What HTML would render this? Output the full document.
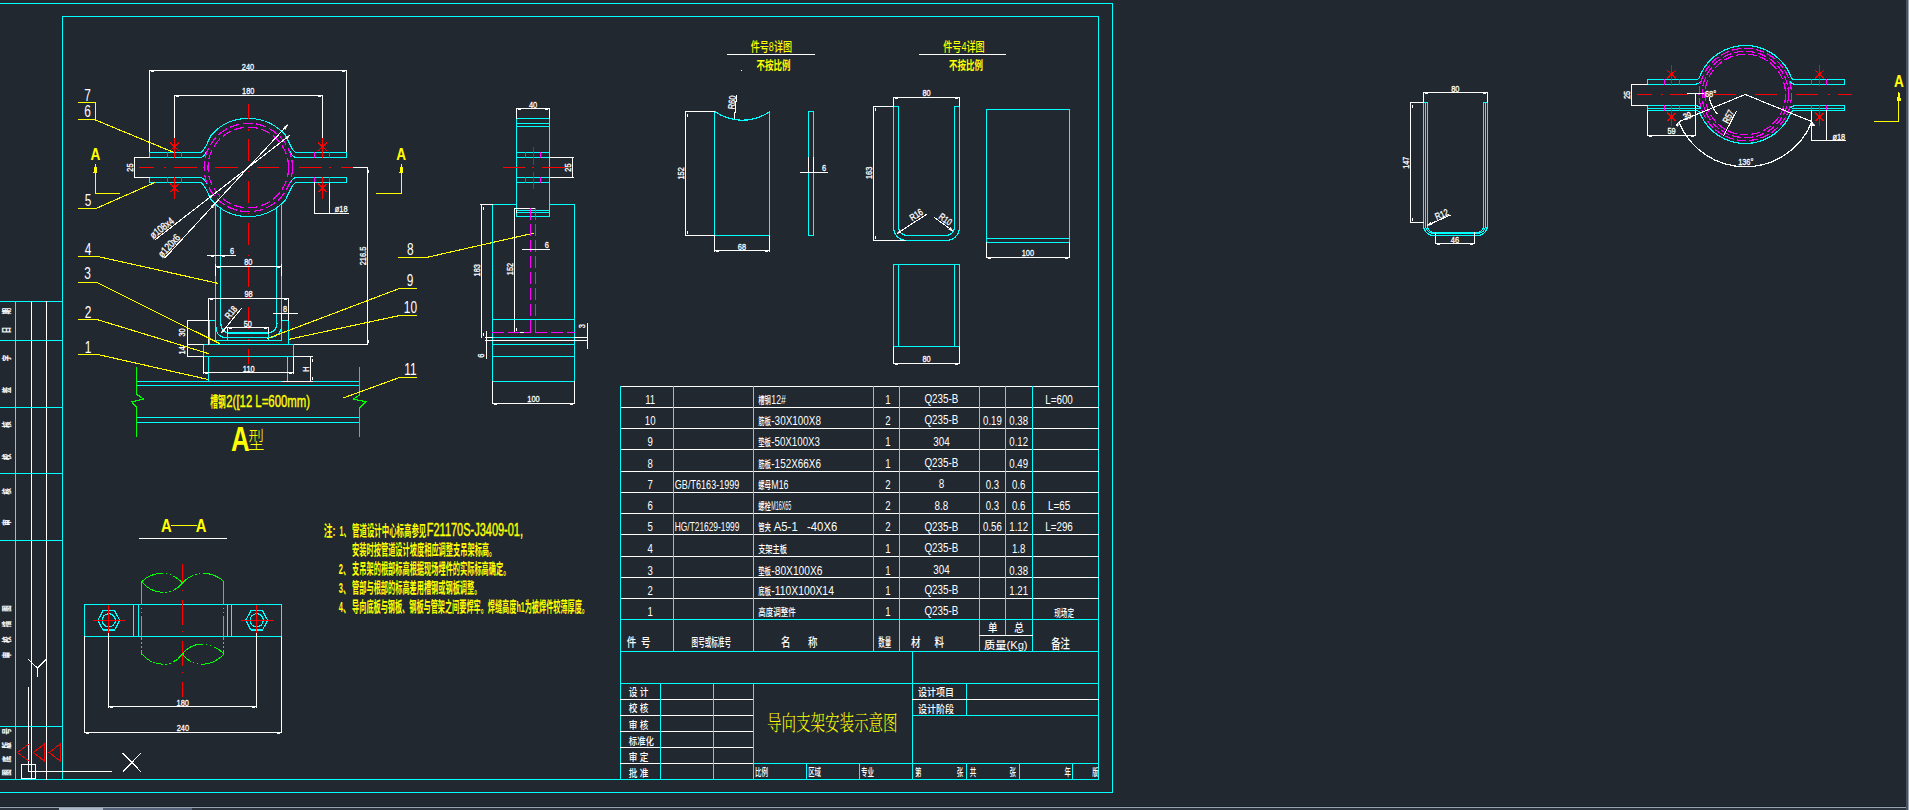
<!DOCTYPE html>
<html lang="zh"><head><meta charset="utf-8"><title>导向支架安装示意图</title>
<style>
html,body{margin:0;padding:0;background:#212830;overflow:hidden}
svg{display:block}
path,circle{shape-rendering:crispEdges}
.c{shape-rendering:crispEdges}
text{font-family:"Liberation Sans","Noto Sans CJK SC",sans-serif}
.l{font-family:"Liberation Sans",sans-serif}
.k{font-family:"Liberation Sans","Noto Sans CJK SC",sans-serif}
.s{font-family:"Liberation Serif","Noto Serif CJK SC",serif}
</style></head><body>
<svg width="1909" height="810" viewBox="0 0 1909 810">
<rect width="1909" height="810" fill="#212830"/>
<path class="c" d="M0 3.5H1113" stroke="#00ffff" stroke-width="1"/>
<path class="c" d="M1112.5 3V793" stroke="#00ffff" stroke-width="1"/>
<path class="c" d="M0 792.5H1113" stroke="#00ffff" stroke-width="1"/>
<path class="c" d="M62 16.5H1099" stroke="#00ffff" stroke-width="1"/>
<path class="c" d="M62.5 16V780" stroke="#00ffff" stroke-width="1"/>
<path class="c" d="M1098.5 16V780" stroke="#00ffff" stroke-width="1"/>
<path class="c" d="M0 779.5H1099" stroke="#00ffff" stroke-width="1"/>
<path class="c" d="M0 301.5H63" stroke="#00ffff" stroke-width="1"/>
<path class="c" d="M15.5 301V780" stroke="#00ffff" stroke-width="1"/>
<path class="c" d="M31.5 301V780" stroke="#ffffff" stroke-width="1"/>
<path class="c" d="M46.5 301V780" stroke="#ffffff" stroke-width="1"/>
<path class="c" d="M0 340.5H63" stroke="#00ffff" stroke-width="1"/>
<path class="c" d="M0 407.5H63" stroke="#00ffff" stroke-width="1"/>
<path class="c" d="M0 473.5H63" stroke="#00ffff" stroke-width="1"/>
<path class="c" d="M0 540.5H63" stroke="#00ffff" stroke-width="1"/>
<path class="c" d="M0 726.5H63" stroke="#00ffff" stroke-width="1"/>
<text class="k" transform="translate(9.5 311) rotate(-90) scale(0.7 1)" font-size="9" fill="#ffffff" text-anchor="middle" font-weight="500" stroke="#ffffff" stroke-width="0.3">期</text>
<text class="k" transform="translate(9.5 330) rotate(-90) scale(0.7 1)" font-size="9" fill="#ffffff" text-anchor="middle" font-weight="500" stroke="#ffffff" stroke-width="0.3">日</text>
<text class="k" transform="translate(9.5 358) rotate(-90) scale(0.7 1)" font-size="9" fill="#ffffff" text-anchor="middle" font-weight="500" stroke="#ffffff" stroke-width="0.3">字</text>
<text class="k" transform="translate(9.5 390) rotate(-90) scale(0.7 1)" font-size="9" fill="#ffffff" text-anchor="middle" font-weight="500" stroke="#ffffff" stroke-width="0.3">签</text>
<text class="k" transform="translate(9.5 424.7) rotate(-90) scale(0.7 1)" font-size="9" fill="#ffffff" text-anchor="middle" font-weight="500" stroke="#ffffff" stroke-width="0.3">核</text>
<text class="k" transform="translate(9.5 456.8) rotate(-90) scale(0.7 1)" font-size="9" fill="#ffffff" text-anchor="middle" font-weight="500" stroke="#ffffff" stroke-width="0.3">校</text>
<text class="k" transform="translate(9.5 491.4) rotate(-90) scale(0.7 1)" font-size="9" fill="#ffffff" text-anchor="middle" font-weight="500" stroke="#ffffff" stroke-width="0.3">核</text>
<text class="k" transform="translate(9.5 522.7) rotate(-90) scale(0.7 1)" font-size="9" fill="#ffffff" text-anchor="middle" font-weight="500" stroke="#ffffff" stroke-width="0.3">审</text>
<text class="k" transform="translate(9.5 608.5) rotate(-90) scale(0.7 1)" font-size="9" fill="#ffffff" text-anchor="middle" font-weight="500" stroke="#ffffff" stroke-width="0.3">图</text>
<text class="k" transform="translate(9.5 624) rotate(-90) scale(0.7 1)" font-size="9" fill="#ffffff" text-anchor="middle" font-weight="500" stroke="#ffffff" stroke-width="0.3">描</text>
<text class="k" transform="translate(9.5 639.7) rotate(-90) scale(0.7 1)" font-size="9" fill="#ffffff" text-anchor="middle" font-weight="500" stroke="#ffffff" stroke-width="0.3">校</text>
<text class="k" transform="translate(9.5 655.2) rotate(-90) scale(0.7 1)" font-size="9" fill="#ffffff" text-anchor="middle" font-weight="500" stroke="#ffffff" stroke-width="0.3">审</text>
<text class="k" transform="translate(9.5 731.3) rotate(-90) scale(0.7 1)" font-size="9" fill="#ffffff" text-anchor="middle" font-weight="500" stroke="#ffffff" stroke-width="0.3">号</text>
<text class="k" transform="translate(9.5 745.4) rotate(-90) scale(0.7 1)" font-size="9" fill="#ffffff" text-anchor="middle" font-weight="500" stroke="#ffffff" stroke-width="0.3">版</text>
<text class="k" transform="translate(9.5 759) rotate(-90) scale(0.7 1)" font-size="9" fill="#ffffff" text-anchor="middle" font-weight="500" stroke="#ffffff" stroke-width="0.3">底</text>
<text class="k" transform="translate(9.5 772.6) rotate(-90) scale(0.7 1)" font-size="9" fill="#ffffff" text-anchor="middle" font-weight="500" stroke="#ffffff" stroke-width="0.3">图</text>
<path class="c" d="M28.5 687V772" stroke="#ffffff" stroke-width="1"/>
<path class="c" d="M28 771.5H112" stroke="#ffffff" stroke-width="1"/>
<path class="c" d="M21 764.5H36" stroke="#ffffff" stroke-width="1"/>
<path class="c" d="M21 778.5H36" stroke="#ffffff" stroke-width="1"/>
<path class="c" d="M21.5 764V779" stroke="#ffffff" stroke-width="1"/>
<path class="c" d="M35.5 764V779" stroke="#ffffff" stroke-width="1"/>
<path d="M27.9 659L37.4 668L46.2 659.5M37.4 668V677" stroke="#ffffff" stroke-width="1" fill="none"/>
<path d="M122.8 753.1L141 771.8M141 753.1L122.8 771.8" stroke="#ffffff" stroke-width="1" fill="none"/>
<path d="M17.5 752.5L29.5 743.6V761.5Z" stroke="#ff0000" stroke-width="1" fill="none"/>
<path d="M33.4 752.5L44.8 743.6V761.5Z" stroke="#ff0000" stroke-width="1" fill="none"/>
<path d="M49.2 752.5L60.7 743.6V761.5Z" stroke="#ff0000" stroke-width="1" fill="none"/>
<rect x="0" y="806" width="1909" height="1" fill="#1a2027"/>
<rect x="0" y="807" width="1909" height="1" fill="#98a4b4"/>
<rect x="0" y="808" width="1909" height="2" fill="#2c3440"/>
<rect x="59" y="808" width="44" height="2" fill="#a9b5c5"/>
<rect x="103" y="808" width="89" height="2" fill="#55627a"/>
<rect x="1906" y="0" width="2" height="810" fill="#4a5260"/>
<rect x="1908" y="0" width="1" height="810" fill="#98a4b4"/>
<path class="c" d="M149.5 70V153" stroke="#ffffff" stroke-width="1"/>
<path class="c" d="M346.5 70V153" stroke="#ffffff" stroke-width="1"/>
<path class="c" d="M149 70.5H347" stroke="#ffffff" stroke-width="1"/>
<rect x="151" y="71" width="3" height="1" fill="#ffffff"/>
<rect x="342" y="71" width="3" height="1" fill="#ffffff"/>
<text class="l" transform="translate(248 69.5) scale(0.78 1)" font-size="9.5" fill="#ffffff" text-anchor="middle" stroke="#ffffff" stroke-width="0.3">240</text>
<path class="c" d="M174.5 95V139" stroke="#ffffff" stroke-width="1"/>
<path class="c" d="M322.5 95V139" stroke="#ffffff" stroke-width="1"/>
<path class="c" d="M174 95.5H323" stroke="#ffffff" stroke-width="1"/>
<rect x="176" y="96" width="3" height="1" fill="#ffffff"/>
<rect x="318" y="96" width="3" height="1" fill="#ffffff"/>
<text class="l" transform="translate(248.2 94) scale(0.78 1)" font-size="9.5" fill="#ffffff" text-anchor="middle" stroke="#ffffff" stroke-width="0.3">180</text>
<path d="M149.5 152.5H200.07Q203.78 152.5 210.67 135.8A49.2 49.2 0 0 1 285.93 135.8Q292.82 152.5 296.53 152.5H346.5" stroke="#00ffff" stroke-width="1.2" fill="none"/>
<path d="M149.5 182.5H200.07Q203.78 182.5 210.67 199.2A49.2 49.2 0 0 0 285.93 199.2Q292.82 182.5 296.53 182.5H346.5" stroke="#00ffff" stroke-width="1.2" fill="none"/>
<path d="M149.5 157.5H200.28Q203.78 157.5 206.78 151.5" stroke="#00ffff" stroke-width="1.2" fill="none"/>
<path d="M346.5 157.5H296.32Q292.82 157.5 289.82 151.5" stroke="#00ffff" stroke-width="1.2" fill="none"/>
<path d="M149.5 177.5H200.28Q203.78 177.5 206.78 183.5" stroke="#00ffff" stroke-width="1.2" fill="none"/>
<path d="M346.5 177.5H296.32Q292.82 177.5 289.82 183.5" stroke="#00ffff" stroke-width="1.2" fill="none"/>
<path class="c" d="M149.5 152V158" stroke="#00ffff" stroke-width="1"/>
<path class="c" d="M346.5 152V158" stroke="#00ffff" stroke-width="1"/>
<path class="c" d="M149.5 177V183" stroke="#00ffff" stroke-width="1"/>
<path class="c" d="M346.5 177V183" stroke="#00ffff" stroke-width="1"/>
<circle cx="248.3" cy="167.5" r="44.2" stroke="#ff00ff" stroke-width="1.2" fill="none" stroke-dasharray="10 3.5"/>
<circle cx="248.3" cy="167.5" r="40.3" stroke="#ff00ff" stroke-width="1.2" fill="none" stroke-dasharray="10 3.5"/>
<path class="c" d="M167.5 152V158" stroke="#ff00ff" stroke-width="1"/>
<path class="c" d="M167.5 177V183" stroke="#ff00ff" stroke-width="1"/>
<path class="c" d="M181.5 152V158" stroke="#ff00ff" stroke-width="1"/>
<path class="c" d="M181.5 177V183" stroke="#ff00ff" stroke-width="1"/>
<path class="c" d="M314.5 152V158" stroke="#ff00ff" stroke-width="1"/>
<path class="c" d="M314.5 177V183" stroke="#ff00ff" stroke-width="1"/>
<path class="c" d="M329.5 152V158" stroke="#ff00ff" stroke-width="1"/>
<path class="c" d="M329.5 177V183" stroke="#ff00ff" stroke-width="1"/>
<path class="c" d="M139 167.5H154" stroke="#ff0000" stroke-width="1"/>
<path class="c" d="M164 167.5H166" stroke="#ff0000" stroke-width="1"/>
<path class="c" d="M174 167.5H197" stroke="#ff0000" stroke-width="1"/>
<path class="c" d="M215 167.5H238" stroke="#ff0000" stroke-width="1"/>
<path class="c" d="M248 167.5H250" stroke="#ff0000" stroke-width="1"/>
<path class="c" d="M257 167.5H279" stroke="#ff0000" stroke-width="1"/>
<path class="c" d="M299 167.5H322" stroke="#ff0000" stroke-width="1"/>
<path class="c" d="M329 167.5H331" stroke="#ff0000" stroke-width="1"/>
<path class="c" d="M341 167.5H354" stroke="#ff0000" stroke-width="1"/>
<path class="c" d="M248.5 104V364" stroke="#ff0000" stroke-width="1" stroke-dasharray="22 10.1 1.2 8.6" stroke-dashoffset="6.8"/>
<path class="c" d="M174.5 138V158" stroke="#ff0000" stroke-width="1"/>
<path class="c" d="M174.5 177V199" stroke="#ff0000" stroke-width="1"/>
<path d="M170.2 142.60000000000002L178.8 151.0M178.8 142.60000000000002L170.2 151.0" stroke="#ff0000" stroke-width="1" fill="none"/>
<path d="M170.2 183.8L178.8 192.2M178.8 183.8L170.2 192.2" stroke="#ff0000" stroke-width="1" fill="none"/>
<path class="c" d="M322.5 138V158" stroke="#ff0000" stroke-width="1"/>
<path class="c" d="M322.5 177V199" stroke="#ff0000" stroke-width="1"/>
<path d="M318.2 142.60000000000002L326.8 151.0M326.8 142.60000000000002L318.2 151.0" stroke="#ff0000" stroke-width="1" fill="none"/>
<path d="M318.2 183.8L326.8 192.2M326.8 183.8L318.2 192.2" stroke="#ff0000" stroke-width="1" fill="none"/>
<path class="c" d="M134.5 157V178" stroke="#ffffff" stroke-width="1"/>
<path class="c" d="M134 157.5H150" stroke="#ffffff" stroke-width="1"/>
<path class="c" d="M134 177.5H150" stroke="#ffffff" stroke-width="1"/>
<text class="l" transform="translate(132.6 167.6) rotate(-90) scale(0.78 1)" font-size="9.5" fill="#ffffff" text-anchor="middle" stroke="#ffffff" stroke-width="0.3">25</text>
<path class="c" d="M353 167.5H368" stroke="#ffffff" stroke-width="1"/>
<path class="c" d="M367.5 167V345" stroke="#ffffff" stroke-width="1"/>
<path class="c" d="M294 344.5H368" stroke="#ffffff" stroke-width="1"/>
<rect x="368" y="170" width="1" height="3" fill="#ffffff"/>
<rect x="368" y="340" width="1" height="3" fill="#ffffff"/>
<text class="l" transform="translate(365.8 256) rotate(-90) scale(0.78 1)" font-size="9.5" fill="#ffffff" text-anchor="middle" stroke="#ffffff" stroke-width="0.3">216.5</text>
<path class="c" d="M314.5 182V214" stroke="#ffffff" stroke-width="1"/>
<path class="c" d="M329.5 182V214" stroke="#ffffff" stroke-width="1"/>
<path class="c" d="M314 213.5H349" stroke="#ffffff" stroke-width="1"/>
<text class="l" transform="translate(341.2 211.6) scale(0.78 1)" font-size="9.5" fill="#ffffff" text-anchor="middle" stroke="#ffffff" stroke-width="0.3">ø18</text>
<path d="M287.6 124.9L164.5 258.3" stroke="#ffffff" stroke-width="1.1"/>
<path d="M289.8 135.3L155.2 239.7" stroke="#ffffff" stroke-width="1.1"/>
<path d="M287.6 124.9L285.5 129.09L283.59 127.33Z" fill="#ffffff" stroke="#ffffff" stroke-width="0.5"/>
<path d="M289.8 135.3L287.04 139.09L285.45 137.03Z" fill="#ffffff" stroke="#ffffff" stroke-width="0.5"/>
<path d="M214.94 203.66L212.84 207.85L210.93 206.09Z" fill="#ffffff" stroke="#ffffff" stroke-width="0.5"/>
<path d="M213.38 194.6L210.62 198.38L209.03 196.33Z" fill="#ffffff" stroke="#ffffff" stroke-width="0.5"/>
<text class="l" transform="translate(164 230.8) rotate(-37.81) scale(0.78 1)" font-size="10.5" fill="#ffffff" text-anchor="middle" stroke="#ffffff" stroke-width="0.3">ø108x4</text>
<text class="l" transform="translate(171.7 248.1) rotate(-47.31) scale(0.78 1)" font-size="10.5" fill="#ffffff" text-anchor="middle" stroke="#ffffff" stroke-width="0.3">ø120x6</text>
<path class="c" d="M215.5 204V328" stroke="#00ffff" stroke-width="1"/>
<path class="c" d="M220.5 207V324" stroke="#00ffff" stroke-width="1"/>
<path class="c" d="M276.5 207V324" stroke="#00ffff" stroke-width="1"/>
<path class="c" d="M281.5 204V328" stroke="#00ffff" stroke-width="1"/>
<path d="M215.9 327Q216.2 336.5 225 337.7H269.5Q280.4 336.5 281.7 327" stroke="#00ffff" stroke-width="1.2" fill="none"/>
<path d="M220.7 323Q221 331.5 228 333H269Q276.5 331.5 277 323" stroke="#00ffff" stroke-width="1.2" fill="none"/>
<path class="c" d="M215 340.5H282" stroke="#00ffff" stroke-width="1"/>
<path class="c" d="M215.5 327V341" stroke="#00ffff" stroke-width="1"/>
<path class="c" d="M281.5 327V341" stroke="#00ffff" stroke-width="1"/>
<path class="c" d="M227.5 333V341" stroke="#00ffff" stroke-width="1"/>
<path class="c" d="M268.5 333V341" stroke="#00ffff" stroke-width="1"/>
<path class="c" d="M209 320.5H216" stroke="#00ffff" stroke-width="1"/>
<path class="c" d="M209.5 320V345" stroke="#00ffff" stroke-width="1"/>
<path class="c" d="M281 320.5H289" stroke="#00ffff" stroke-width="1"/>
<path class="c" d="M288.5 320V345" stroke="#00ffff" stroke-width="1"/>
<path class="c" d="M203 344.5H294" stroke="#00ffff" stroke-width="1"/>
<path class="c" d="M203 356.5H294" stroke="#00ffff" stroke-width="1"/>
<path class="c" d="M203.5 344V357" stroke="#00ffff" stroke-width="1"/>
<path class="c" d="M293.5 344V357" stroke="#00ffff" stroke-width="1"/>
<path class="c" d="M208.5 356V382" stroke="#00ffff" stroke-width="1"/>
<path class="c" d="M287.5 356V382" stroke="#00ffff" stroke-width="1"/>
<path class="c" d="M136 381.5H360" stroke="#00ffff" stroke-width="1"/>
<path class="c" d="M136 385.5H360" stroke="#00ffff" stroke-width="1"/>
<path class="c" d="M136 417.5H360" stroke="#00ffff" stroke-width="1"/>
<path class="c" d="M136 422.5H360" stroke="#00ffff" stroke-width="1"/>
<path class="c" d="M136.5 367V395" stroke="#00ff00" stroke-width="1"/>
<path class="c" d="M136.5 407V437" stroke="#00ff00" stroke-width="1"/>
<path class="c" d="M359.5 367V395" stroke="#00ff00" stroke-width="1"/>
<path class="c" d="M359.5 407V437" stroke="#00ff00" stroke-width="1"/>
<path d="M137.1 394.5L143.6 399L131.7 401.8L137.1 407.4" stroke="#00ff00" stroke-width="1.2" fill="none"/>
<path d="M360.1 394.5L353.6 399L365.6 401.8L360.1 407.4" stroke="#00ff00" stroke-width="1.2" fill="none"/>
<text class="k" x="210.3" y="406.6" font-size="15" fill="#ffff00" font-weight="700" textLength="15.5" lengthAdjust="spacingAndGlyphs">槽钢</text>
<text class="l" x="226.3" y="407" font-size="16.5" fill="#ffff00" stroke="#ffff00" stroke-width="0.35" textLength="83.7" lengthAdjust="spacingAndGlyphs">2([12 L=600mm)</text>
<text class="l" transform="translate(231 451) scale(0.72 1)" font-size="36" fill="#ffff00" text-anchor="start" font-weight="700">A</text>
<text class="k" transform="translate(248 449) scale(0.68 1)" font-size="24" fill="#ffff00" text-anchor="start" font-weight="300">型</text>
<path class="c" d="M207 255.5H236" stroke="#ffffff" stroke-width="1"/>
<text class="l" transform="translate(232 253.8) scale(0.78 1)" font-size="9.5" fill="#ffffff" text-anchor="middle" stroke="#ffffff" stroke-width="0.3">6</text>
<rect x="211" y="256" width="3" height="1" fill="#ffffff"/>
<rect x="222" y="256" width="3" height="1" fill="#ffffff"/>
<path class="c" d="M215.5 264V276" stroke="#ffffff" stroke-width="1"/>
<path class="c" d="M281.5 264V276" stroke="#ffffff" stroke-width="1"/>
<path class="c" d="M215 266.5H282" stroke="#ffffff" stroke-width="1"/>
<rect x="217" y="267" width="3" height="1" fill="#ffffff"/>
<rect x="277" y="267" width="3" height="1" fill="#ffffff"/>
<text class="l" transform="translate(248.3 265) scale(0.78 1)" font-size="9.5" fill="#ffffff" text-anchor="middle" stroke="#ffffff" stroke-width="0.3">80</text>
<path class="c" d="M208.5 298V345" stroke="#ffffff" stroke-width="1"/>
<path class="c" d="M288.5 298V321" stroke="#ffffff" stroke-width="1"/>
<path class="c" d="M208 298.5H289" stroke="#ffffff" stroke-width="1"/>
<rect x="210" y="299" width="3" height="1" fill="#ffffff"/>
<rect x="284" y="299" width="3" height="1" fill="#ffffff"/>
<text class="l" transform="translate(248.6 297) scale(0.78 1)" font-size="9.5" fill="#ffffff" text-anchor="middle" stroke="#ffffff" stroke-width="0.3">98</text>
<path class="c" d="M273 313.5H298" stroke="#ffffff" stroke-width="1"/>
<text class="l" transform="translate(285 312) scale(0.78 1)" font-size="9.5" fill="#ffffff" text-anchor="middle" stroke="#ffffff" stroke-width="0.3">8</text>
<path class="c" d="M281.5 313V321" stroke="#ffffff" stroke-width="1"/>
<path class="c" d="M288.5 313V321" stroke="#ffffff" stroke-width="1"/>
<path class="c" d="M227.5 327V334" stroke="#ffffff" stroke-width="1"/>
<path class="c" d="M268.5 327V334" stroke="#ffffff" stroke-width="1"/>
<path class="c" d="M227 327.5H269" stroke="#ffffff" stroke-width="1"/>
<rect x="229" y="328" width="3" height="1" fill="#ffffff"/>
<rect x="264" y="328" width="3" height="1" fill="#ffffff"/>
<text class="l" transform="translate(247.75 326.8) scale(0.78 1)" font-size="9.5" fill="#ffffff" text-anchor="middle" stroke="#ffffff" stroke-width="0.3">50</text>
<path d="M221.3 333.1L241.8 307.9" stroke="#ffffff" stroke-width="1.1"/>
<path d="M221.3 333.1L223.12 328.78L225.14 330.42Z" fill="#ffffff" stroke="#ffffff" stroke-width="0.5"/>
<text class="l" transform="translate(233.5 314.5) rotate(-51) scale(0.78 1)" font-size="9.5" fill="#ffffff" text-anchor="middle" stroke="#ffffff" stroke-width="0.3">R18</text>
<path class="c" d="M187.5 320V357" stroke="#ffffff" stroke-width="1"/>
<path class="c" d="M187 320.5H210" stroke="#ffffff" stroke-width="1"/>
<path class="c" d="M187 344.5H204" stroke="#ffffff" stroke-width="1"/>
<path class="c" d="M187 356.5H204" stroke="#ffffff" stroke-width="1"/>
<text class="l" transform="translate(185.4 332.5) rotate(-90) scale(0.78 1)" font-size="9.5" fill="#ffffff" text-anchor="middle" stroke="#ffffff" stroke-width="0.3">30</text>
<text class="l" transform="translate(185.4 350.3) rotate(-90) scale(0.78 1)" font-size="9.5" fill="#ffffff" text-anchor="middle" stroke="#ffffff" stroke-width="0.3">14</text>
<path class="c" d="M203.5 356V374" stroke="#ffffff" stroke-width="1"/>
<path class="c" d="M293.5 356V374" stroke="#ffffff" stroke-width="1"/>
<path class="c" d="M203 372.5H294" stroke="#ffffff" stroke-width="1"/>
<rect x="205" y="373" width="3" height="1" fill="#ffffff"/>
<rect x="289" y="373" width="3" height="1" fill="#ffffff"/>
<text class="l" transform="translate(248.75 371.5) scale(0.78 1)" font-size="9.5" fill="#ffffff" text-anchor="middle" stroke="#ffffff" stroke-width="0.3">110</text>
<path class="c" d="M310.5 356V382" stroke="#ffffff" stroke-width="1"/>
<path class="c" d="M293 356.5H313" stroke="#ffffff" stroke-width="1"/>
<path class="c" d="M281 381.5H313" stroke="#ffffff" stroke-width="1"/>
<text class="l" transform="translate(308.8 369) rotate(-90) scale(0.78 1)" font-size="9.5" fill="#ffffff" text-anchor="middle" stroke="#ffffff" stroke-width="0.3">H</text>
<rect x="312" y="359" width="1" height="3" fill="#ffffff"/>
<rect x="312" y="377" width="1" height="3" fill="#ffffff"/>
<path class="c" d="M78 102.5H96" stroke="#ffff00" stroke-width="1"/>
<path class="c" d="M95.5 102V120" stroke="#ffff00" stroke-width="1"/>
<path class="c" d="M78 119.5H96" stroke="#ffff00" stroke-width="1"/>
<path d="M95.5 120L174 152.5" stroke="#ffff00" stroke-width="1.1"/>
<text class="l" transform="translate(87.5 100.8) scale(0.72 1)" font-size="16.5" fill="#ffffff" text-anchor="middle">7</text>
<text class="l" transform="translate(87.5 117.2) scale(0.72 1)" font-size="16.5" fill="#ffffff" text-anchor="middle">6</text>
<path class="c" d="M78 208.5H97" stroke="#ffff00" stroke-width="1"/>
<path d="M96 208.5L154.6 182.6" stroke="#ffff00" stroke-width="1.1"/>
<text class="l" transform="translate(88 206) scale(0.72 1)" font-size="16.5" fill="#ffffff" text-anchor="middle">5</text>
<path class="c" d="M78 256.5H98" stroke="#ffff00" stroke-width="1"/>
<path d="M97.8 256.5L217.9 283.3" stroke="#ffff00" stroke-width="1.1"/>
<text class="l" transform="translate(88 254.9) scale(0.72 1)" font-size="16.5" fill="#ffffff" text-anchor="middle">4</text>
<path class="c" d="M78 282.5H97" stroke="#ffff00" stroke-width="1"/>
<path d="M96.8 282.5L219.8 343.7" stroke="#ffff00" stroke-width="1.1"/>
<text class="l" transform="translate(87.5 279.4) scale(0.72 1)" font-size="16.5" fill="#ffffff" text-anchor="middle">3</text>
<path class="c" d="M78 319.5H98" stroke="#ffff00" stroke-width="1"/>
<path d="M97 319.5L208.9 353.7" stroke="#ffff00" stroke-width="1.1"/>
<text class="l" transform="translate(88 317.6) scale(0.72 1)" font-size="16.5" fill="#ffffff" text-anchor="middle">2</text>
<path class="c" d="M78 354.5H98" stroke="#ffff00" stroke-width="1"/>
<path d="M97.8 354.5L208.3 379.5" stroke="#ffff00" stroke-width="1.1"/>
<text class="l" transform="translate(88 353) scale(0.72 1)" font-size="16.5" fill="#ffffff" text-anchor="middle">1</text>
<path class="c" d="M398 257.5H427" stroke="#ffff00" stroke-width="1"/>
<path d="M426.3 257.5L533.6 233.2" stroke="#ffff00" stroke-width="1.1"/>
<text class="l" transform="translate(410.3 254.6) scale(0.72 1)" font-size="16.5" fill="#ffffff" text-anchor="middle">8</text>
<path class="c" d="M399 288.5H417" stroke="#ffff00" stroke-width="1"/>
<path d="M399.4 288.5L267 338.7" stroke="#ffff00" stroke-width="1.1"/>
<text class="l" transform="translate(410 286.4) scale(0.72 1)" font-size="16.5" fill="#ffffff" text-anchor="middle">9</text>
<path class="c" d="M399 315.5H417" stroke="#ffff00" stroke-width="1"/>
<path d="M399.6 315.5L288.9 339.3" stroke="#ffff00" stroke-width="1.1"/>
<text class="l" transform="translate(410.4 313) scale(0.72 1)" font-size="16.5" fill="#ffffff" text-anchor="middle">10</text>
<path class="c" d="M399 377.5H417" stroke="#ffff00" stroke-width="1"/>
<path d="M399.6 377.5L343.6 397.8" stroke="#ffff00" stroke-width="1.1"/>
<text class="l" transform="translate(410.4 374.7) scale(0.72 1)" font-size="16.5" fill="#ffffff" text-anchor="middle">11</text>
<path class="c" d="M95.5 170V194" stroke="#ffff00" stroke-width="1"/>
<path class="c" d="M95 193.5H120" stroke="#ffff00" stroke-width="1"/>
<path d="M95.5 164.4L97.0 172.5H94.0Z" stroke="#ffff00" stroke-width="1" fill="#ffff00"/>
<text class="l" transform="translate(95.4 160) scale(0.8 1)" font-size="17" fill="#ffff00" text-anchor="middle" font-weight="700">A</text>
<path class="c" d="M401.5 170V194" stroke="#ffff00" stroke-width="1"/>
<path class="c" d="M376 193.5H402" stroke="#ffff00" stroke-width="1"/>
<path d="M401.5 164.4L403.0 172.5H400.0Z" stroke="#ffff00" stroke-width="1" fill="#ffff00"/>
<text class="l" transform="translate(401.2 160) scale(0.8 1)" font-size="17" fill="#ffff00" text-anchor="middle" font-weight="700">A</text>
<text class="l" transform="translate(166.3 532) scale(0.78 1)" font-size="19" fill="#ffff00" text-anchor="middle" font-weight="700">A</text>
<text class="l" transform="translate(201 532) scale(0.78 1)" font-size="19" fill="#ffff00" text-anchor="middle" font-weight="700">A</text>
<path class="c" d="M171 525.5H197" stroke="#ffff00" stroke-width="1"/>
<path class="c" d="M139 538.5H227" stroke="#ffffff" stroke-width="1"/>
<path class="c" d="M84 604.5H282" stroke="#00ffff" stroke-width="1"/>
<path class="c" d="M84 636.5H282" stroke="#00ffff" stroke-width="1"/>
<path class="c" d="M84.5 604V637" stroke="#00ffff" stroke-width="1"/>
<path class="c" d="M281.5 604V637" stroke="#00ffff" stroke-width="1"/>
<path class="c" d="M133.5 604V637" stroke="#00ffff" stroke-width="1"/>
<path class="c" d="M138.5 604V637" stroke="#00ffff" stroke-width="1"/>
<path class="c" d="M227.5 604V637" stroke="#00ffff" stroke-width="1"/>
<path class="c" d="M231.5 604V637" stroke="#00ffff" stroke-width="1"/>
<path class="c" d="M182.5 564V697" stroke="#ff0000" stroke-width="1" stroke-dasharray="25 6 1.2 9" stroke-dashoffset="5.4"/>
<path class="c" d="M141.5 581V655" stroke="#00ff00" stroke-width="1" stroke-dasharray="24 2.5 1.5 2.5 1.5 2.5"/>
<path class="c" d="M223.5 581V655" stroke="#00ff00" stroke-width="1" stroke-dasharray="24 2.5 1.5 2.5 1.5 2.5"/>
<path d="M141.7 581.9C148 574 168 567 182.4 582.9C197 567 217 574 224.1 581.9" stroke="#00ff00" stroke-width="1" fill="none" stroke-dasharray="24 2.5 1.5 2.5 1.5 2.5"/>
<path d="M141.7 581.9C150 592 170 599 182.4 582.9" stroke="#00ff00" stroke-width="1" fill="none" stroke-dasharray="24 2.5 1.5 2.5 1.5 2.5"/>
<path d="M141.7 654C150 664 170 671 182.4 654C195 671 215 664 224.1 654" stroke="#00ff00" stroke-width="1" fill="none" stroke-dasharray="24 2.5 1.5 2.5 1.5 2.5"/>
<path d="M182.4 654C195 638 215 644 224.1 654" stroke="#00ff00" stroke-width="1" fill="none" stroke-dasharray="24 2.5 1.5 2.5 1.5 2.5"/>
<path d="M97.8 620.3L103.0 610.6999999999999H114.6L119.8 620.3L114.6 629.9H103.0Z" stroke="#00ffff" stroke-width="1.2" fill="none"/>
<circle cx="108.8" cy="620.3" r="6.6" stroke="#00ffff" stroke-width="1.2" fill="none"/>
<path class="c" d="M93 620.5H125" stroke="#ff0000" stroke-width="1"/>
<path class="c" d="M108.5 605V634" stroke="#ff0000" stroke-width="1"/>
<path class="c" d="M108.5 633V708" stroke="#ffffff" stroke-width="1"/>
<path d="M245.7 620.3L250.89999999999998 610.6999999999999H262.5L267.7 620.3L262.5 629.9H250.89999999999998Z" stroke="#00ffff" stroke-width="1.2" fill="none"/>
<circle cx="256.7" cy="620.3" r="6.6" stroke="#00ffff" stroke-width="1.2" fill="none"/>
<path class="c" d="M241 620.5H273" stroke="#ff0000" stroke-width="1"/>
<path class="c" d="M256.5 605V634" stroke="#ff0000" stroke-width="1"/>
<path class="c" d="M256.5 633V708" stroke="#ffffff" stroke-width="1"/>
<path class="c" d="M108 706.5H257" stroke="#ffffff" stroke-width="1"/>
<rect x="110" y="707" width="3" height="1" fill="#ffffff"/>
<rect x="252" y="707" width="3" height="1" fill="#ffffff"/>
<text class="l" transform="translate(182.75 705.5) scale(0.78 1)" font-size="9.5" fill="#ffffff" text-anchor="middle" stroke="#ffffff" stroke-width="0.3">180</text>
<path class="c" d="M84.5 636V733" stroke="#ffffff" stroke-width="1"/>
<path class="c" d="M281.5 636V733" stroke="#ffffff" stroke-width="1"/>
<path class="c" d="M84 732.5H282" stroke="#ffffff" stroke-width="1"/>
<rect x="86" y="733" width="3" height="1" fill="#ffffff"/>
<rect x="277" y="733" width="3" height="1" fill="#ffffff"/>
<text class="l" transform="translate(182.9 731.2) scale(0.78 1)" font-size="9.5" fill="#ffffff" text-anchor="middle" stroke="#ffffff" stroke-width="0.3">240</text>
<text class="k" x="323.8" y="536.2" font-size="15" fill="#ffff00" font-weight="700" textLength="11.7" lengthAdjust="spacingAndGlyphs">注:</text>
<text class="k" x="339.5" y="536.2" font-size="15" fill="#ffff00" font-weight="700" textLength="11.0" lengthAdjust="spacingAndGlyphs">1、</text>
<text class="k" x="352.1" y="536.2" font-size="15" fill="#ffff00" font-weight="700" textLength="74.2" lengthAdjust="spacingAndGlyphs">管道设计中心标高参见</text>
<text class="l" x="426.8" y="536.4" font-size="17.5" fill="#ffff00" stroke="#ffff00" stroke-width="0.4" textLength="96.2" lengthAdjust="spacingAndGlyphs">F21170S-J3409-01,</text>
<text class="k" x="352.1" y="555" font-size="15" fill="#ffff00" font-weight="700" textLength="144.2" lengthAdjust="spacingAndGlyphs">安装时按管道设计坡度相应调整支吊架标高。</text>
<text class="k" x="338.8" y="574" font-size="15" fill="#ffff00" font-weight="700" textLength="11.7" lengthAdjust="spacingAndGlyphs">2、</text>
<text class="k" x="352.1" y="574" font-size="15" fill="#ffff00" font-weight="700" textLength="158.3" lengthAdjust="spacingAndGlyphs">支吊架的根部标高根据现场埋件的实际标高确定。</text>
<text class="k" x="338.8" y="593" font-size="15" fill="#ffff00" font-weight="700" textLength="11.7" lengthAdjust="spacingAndGlyphs">3、</text>
<text class="k" x="352.1" y="593" font-size="15" fill="#ffff00" font-weight="700" textLength="129.3" lengthAdjust="spacingAndGlyphs">管部与根部的标高差用槽钢或钢板调整。</text>
<text class="k" x="338.8" y="612" font-size="15" fill="#ffff00" font-weight="700" textLength="11.7" lengthAdjust="spacingAndGlyphs">4、</text>
<text class="k" x="352.1" y="612" font-size="15" fill="#ffff00" font-weight="700" textLength="236.9" lengthAdjust="spacingAndGlyphs">导向底板与钢板、钢板与管架之间要焊牢。焊缝高度h1为被焊件较薄厚度。</text>
<path class="c" d="M516.5 118V217" stroke="#00ffff" stroke-width="1"/>
<path class="c" d="M549.5 118V217" stroke="#00ffff" stroke-width="1"/>
<path class="c" d="M516 118.5H550" stroke="#00ffff" stroke-width="1"/>
<path class="c" d="M516 123.5H550" stroke="#00ffff" stroke-width="1"/>
<path class="c" d="M516 126.5H550" stroke="#00ffff" stroke-width="1"/>
<path class="c" d="M516 152.5H550" stroke="#00ffff" stroke-width="1"/>
<path class="c" d="M516 157.5H550" stroke="#00ffff" stroke-width="1"/>
<path class="c" d="M516 177.5H550" stroke="#00ffff" stroke-width="1"/>
<path class="c" d="M516 182.5H550" stroke="#00ffff" stroke-width="1"/>
<path class="c" d="M516 210.5H550" stroke="#00ffff" stroke-width="1"/>
<path class="c" d="M516 212.5H550" stroke="#00ffff" stroke-width="1"/>
<path class="c" d="M516 216.5H550" stroke="#00ffff" stroke-width="1"/>
<path class="c" d="M516.5 108V119" stroke="#ffffff" stroke-width="1"/>
<path class="c" d="M549.5 108V119" stroke="#ffffff" stroke-width="1"/>
<path class="c" d="M516 108.5H550" stroke="#ffffff" stroke-width="1"/>
<rect x="518" y="109" width="3" height="1" fill="#ffffff"/>
<rect x="545" y="109" width="3" height="1" fill="#ffffff"/>
<text class="l" transform="translate(533.05 107.8) scale(0.78 1)" font-size="9.5" fill="#ffffff" text-anchor="middle" stroke="#ffffff" stroke-width="0.3">40</text>
<path class="c" d="M503 167.5H525" stroke="#ff0000" stroke-width="1"/>
<path class="c" d="M532 167.5H534" stroke="#ff0000" stroke-width="1"/>
<path class="c" d="M542 167.5H566" stroke="#ff0000" stroke-width="1"/>
<path class="c" d="M533.5 147V165" stroke="#ff0000" stroke-width="1"/>
<path class="c" d="M533.5 172V189" stroke="#ff0000" stroke-width="1"/>
<path class="c" d="M525.5 152V158" stroke="#ff00ff" stroke-width="1"/>
<path class="c" d="M525.5 177V183" stroke="#ff00ff" stroke-width="1"/>
<path class="c" d="M540.5 152V158" stroke="#ff00ff" stroke-width="1"/>
<path class="c" d="M540.5 177V183" stroke="#ff00ff" stroke-width="1"/>
<path class="c" d="M572.5 157V178" stroke="#ffffff" stroke-width="1"/>
<path class="c" d="M549 157.5H574" stroke="#ffffff" stroke-width="1"/>
<path class="c" d="M549 177.5H574" stroke="#ffffff" stroke-width="1"/>
<text class="l" transform="translate(570.8 167.6) rotate(-90) scale(0.78 1)" font-size="9.5" fill="#ffffff" text-anchor="middle" stroke="#ffffff" stroke-width="0.3">25</text>
<path class="c" d="M492 204.5H517" stroke="#00ffff" stroke-width="1"/>
<path class="c" d="M549 204.5H575" stroke="#00ffff" stroke-width="1"/>
<path class="c" d="M492.5 204V382" stroke="#00ffff" stroke-width="1"/>
<path class="c" d="M574.5 204V382" stroke="#00ffff" stroke-width="1"/>
<path class="c" d="M480 204.5H493" stroke="#ffffff" stroke-width="1"/>
<path class="c" d="M481.5 204V338" stroke="#ffffff" stroke-width="1"/>
<text class="l" transform="translate(479.8 270.3) rotate(-90) scale(0.78 1)" font-size="9.5" fill="#ffffff" text-anchor="middle" stroke="#ffffff" stroke-width="0.3">183</text>
<rect x="483" y="207" width="1" height="3" fill="#ffffff"/>
<rect x="483" y="333" width="1" height="3" fill="#ffffff"/>
<path class="c" d="M514 208.5H536" stroke="#ffffff" stroke-width="1"/>
<path class="c" d="M514.5 208V333" stroke="#ffffff" stroke-width="1"/>
<path class="c" d="M514 332.5H531" stroke="#ffffff" stroke-width="1"/>
<text class="l" transform="translate(513 269) rotate(-90) scale(0.78 1)" font-size="9.5" fill="#ffffff" text-anchor="middle" stroke="#ffffff" stroke-width="0.3">152</text>
<rect x="516" y="210" width="1" height="3" fill="#ffffff"/>
<rect x="516" y="328" width="1" height="3" fill="#ffffff"/>
<path class="c" d="M530.5 208V333" stroke="#ff00ff" stroke-width="1" stroke-dasharray="12 4"/>
<path class="c" d="M535.5 208V333" stroke="#ff00ff" stroke-width="1" stroke-dasharray="12 4"/>
<path class="c" d="M492 332.5H531" stroke="#ff00ff" stroke-width="1" stroke-dasharray="12 4"/>
<path class="c" d="M535 332.5H575" stroke="#ff00ff" stroke-width="1" stroke-dasharray="12 4"/>
<path class="c" d="M522 249.5H550" stroke="#ffffff" stroke-width="1"/>
<text class="l" transform="translate(546.7 248.3) scale(0.78 1)" font-size="9.5" fill="#ffffff" text-anchor="middle" stroke="#ffffff" stroke-width="0.3">6</text>
<path class="c" d="M492 319.5H575" stroke="#00ffff" stroke-width="1"/>
<path class="c" d="M492 337.5H575" stroke="#00ffff" stroke-width="1"/>
<path class="c" d="M492 344.5H575" stroke="#00ffff" stroke-width="1"/>
<path class="c" d="M492 356.5H575" stroke="#00ffff" stroke-width="1"/>
<path class="c" d="M492 381.5H575" stroke="#00ffff" stroke-width="1"/>
<path class="c" d="M485 337.5H493" stroke="#ffffff" stroke-width="1"/>
<path class="c" d="M574 337.5H588" stroke="#ffffff" stroke-width="1"/>
<path class="c" d="M485 340.5H588" stroke="#ffffff" stroke-width="1"/>
<path class="c" d="M486.5 331V359" stroke="#ffffff" stroke-width="1"/>
<text class="l" transform="translate(484.4 355.6) rotate(-90) scale(0.78 1)" font-size="9.5" fill="#ffffff" text-anchor="middle" stroke="#ffffff" stroke-width="0.3">6</text>
<path class="c" d="M587.5 323V349" stroke="#ffffff" stroke-width="1"/>
<text class="l" transform="translate(585.4 326.2) rotate(-90) scale(0.78 1)" font-size="9.5" fill="#ffffff" text-anchor="middle" stroke="#ffffff" stroke-width="0.3">3</text>
<path class="c" d="M492.5 381V404" stroke="#ffffff" stroke-width="1"/>
<path class="c" d="M574.5 381V404" stroke="#ffffff" stroke-width="1"/>
<path class="c" d="M492 403.5H575" stroke="#ffffff" stroke-width="1"/>
<rect x="494" y="404" width="3" height="1" fill="#ffffff"/>
<rect x="570" y="404" width="3" height="1" fill="#ffffff"/>
<text class="l" transform="translate(533.45 402) scale(0.78 1)" font-size="9.5" fill="#ffffff" text-anchor="middle" stroke="#ffffff" stroke-width="0.3">100</text>
<text class="k" transform="translate(771.4 50.6) scale(0.7 1)" font-size="13" fill="#ffff00" text-anchor="middle" font-weight="500">件号8详图</text>
<path class="c" d="M727 54.5H815" stroke="#ffffff" stroke-width="1"/>
<text class="k" transform="translate(773.4 70.3) scale(0.68 1)" font-size="12.5" fill="#ffff00" text-anchor="middle" font-weight="700">不按比例</text>
<text class="k" transform="translate(964 50.6) scale(0.7 1)" font-size="13" fill="#ffff00" text-anchor="middle" font-weight="500">件号4详图</text>
<path class="c" d="M919 54.5H1006" stroke="#ffffff" stroke-width="1"/>
<text class="k" transform="translate(966 70.3) scale(0.68 1)" font-size="12.5" fill="#ffff00" text-anchor="middle" font-weight="700">不按比例</text>
<rect x="741" y="70" width="1" height="1" fill="#fff"/>
<path class="c" d="M714.5 111V236" stroke="#00ffff" stroke-width="1"/>
<path class="c" d="M769.5 111V236" stroke="#00ffff" stroke-width="1"/>
<path class="c" d="M714 235.5H770" stroke="#00ffff" stroke-width="1"/>
<path d="M714.5 111.5Q742 129 770.4 111.5" stroke="#00ffff" stroke-width="1.2" fill="none"/>
<path class="c" d="M685.5 111V236" stroke="#ffffff" stroke-width="1"/>
<path class="c" d="M685 111.5H715" stroke="#ffffff" stroke-width="1"/>
<path class="c" d="M685 235.5H715" stroke="#ffffff" stroke-width="1"/>
<text class="l" transform="translate(683.7 173.4) rotate(-90) scale(0.78 1)" font-size="9.5" fill="#ffffff" text-anchor="middle" stroke="#ffffff" stroke-width="0.3">152</text>
<rect x="687" y="114" width="1" height="3" fill="#ffffff"/>
<rect x="687" y="231" width="1" height="3" fill="#ffffff"/>
<path class="c" d="M714.5 235V252" stroke="#ffffff" stroke-width="1"/>
<path class="c" d="M769.5 235V252" stroke="#ffffff" stroke-width="1"/>
<path class="c" d="M714 250.5H770" stroke="#ffffff" stroke-width="1"/>
<rect x="716" y="251" width="3" height="1" fill="#ffffff"/>
<rect x="765" y="251" width="3" height="1" fill="#ffffff"/>
<text class="l" transform="translate(741.95 250) scale(0.78 1)" font-size="9.5" fill="#ffffff" text-anchor="middle" stroke="#ffffff" stroke-width="0.3">68</text>
<path d="M734.4 119.4L736.6 95.3" stroke="#ffffff" stroke-width="1.1"/>
<text class="l" transform="translate(735.2 102.7) rotate(-84) scale(0.78 1)" font-size="9.5" fill="#ffffff" text-anchor="middle" stroke="#ffffff" stroke-width="0.3">R60</text>
<path class="c" d="M808 111.5H814" stroke="#00ffff" stroke-width="1"/>
<path class="c" d="M808 235.5H814" stroke="#00ffff" stroke-width="1"/>
<path class="c" d="M808.5 111V236" stroke="#00ffff" stroke-width="1"/>
<path class="c" d="M813.5 111V236" stroke="#00ffff" stroke-width="1"/>
<path class="c" d="M800 172.5H828" stroke="#ffffff" stroke-width="1"/>
<path class="c" d="M808.5 157V173" stroke="#ffffff" stroke-width="1"/>
<path class="c" d="M813.5 157V173" stroke="#ffffff" stroke-width="1"/>
<text class="l" transform="translate(824 171) scale(0.78 1)" font-size="9.5" fill="#ffffff" text-anchor="middle" stroke="#ffffff" stroke-width="0.3">6</text>
<path d="M893.5 106V227.3A13.2 13.2 0 0 0 906.7 240.5H946.3A13.2 13.2 0 0 0 959.5 227.3V106" stroke="#00ffff" stroke-width="1.2" fill="none"/>
<path d="M898.5 106V227.2A8.3 8.3 0 0 0 906.8 235.5H946.2A8.3 8.3 0 0 0 954.5 227.2V106" stroke="#00ffff" stroke-width="1.2" fill="none"/>
<path class="c" d="M893 106.5H899" stroke="#00ffff" stroke-width="1"/>
<path class="c" d="M954 106.5H960" stroke="#00ffff" stroke-width="1"/>
<path class="c" d="M893.5 97V107" stroke="#ffffff" stroke-width="1"/>
<path class="c" d="M959.5 97V107" stroke="#ffffff" stroke-width="1"/>
<path class="c" d="M893 97.5H960" stroke="#ffffff" stroke-width="1"/>
<rect x="895" y="98" width="3" height="1" fill="#ffffff"/>
<rect x="955" y="98" width="3" height="1" fill="#ffffff"/>
<text class="l" transform="translate(926.6 96) scale(0.78 1)" font-size="9.5" fill="#ffffff" text-anchor="middle" stroke="#ffffff" stroke-width="0.3">80</text>
<path class="c" d="M873.5 106V241" stroke="#ffffff" stroke-width="1"/>
<path class="c" d="M873 106.5H894" stroke="#ffffff" stroke-width="1"/>
<path class="c" d="M873 240.5H906" stroke="#ffffff" stroke-width="1"/>
<text class="l" transform="translate(871.8 172.9) rotate(-90) scale(0.78 1)" font-size="9.5" fill="#ffffff" text-anchor="middle" stroke="#ffffff" stroke-width="0.3">163</text>
<rect x="875" y="108" width="1" height="3" fill="#ffffff"/>
<rect x="875" y="236" width="1" height="3" fill="#ffffff"/>
<path d="M896.9 233.7L926.8 214.1" stroke="#ffffff" stroke-width="1.1"/>
<path d="M896.9 233.7L899.97 230.16L901.38 232.34Z" fill="#ffffff" stroke="#ffffff" stroke-width="0.5"/>
<text class="l" transform="translate(918 217.5) rotate(-33) scale(0.78 1)" font-size="9.5" fill="#ffffff" text-anchor="middle" stroke="#ffffff" stroke-width="0.3">R16</text>
<path d="M953.2 231.1L934.4 217.5" stroke="#ffffff" stroke-width="1.1"/>
<path d="M953.2 231.1L948.8 229.51L950.32 227.4Z" fill="#ffffff" stroke="#ffffff" stroke-width="0.5"/>
<text class="l" transform="translate(943.5 222) rotate(35) scale(0.78 1)" font-size="9.5" fill="#ffffff" text-anchor="middle" stroke="#ffffff" stroke-width="0.3">R10</text>
<path class="c" d="M986 109.5H1070" stroke="#00ffff" stroke-width="1"/>
<path class="c" d="M986 242.5H1070" stroke="#00ffff" stroke-width="1"/>
<path class="c" d="M986.5 109V243" stroke="#00ffff" stroke-width="1"/>
<path class="c" d="M1069.5 109V243" stroke="#00ffff" stroke-width="1"/>
<path class="c" d="M986 238.5H1070" stroke="#00ffff" stroke-width="1"/>
<path class="c" d="M986.5 242V258" stroke="#ffffff" stroke-width="1"/>
<path class="c" d="M1069.5 242V258" stroke="#ffffff" stroke-width="1"/>
<path class="c" d="M986 257.5H1070" stroke="#ffffff" stroke-width="1"/>
<rect x="988" y="258" width="3" height="1" fill="#ffffff"/>
<rect x="1065" y="258" width="3" height="1" fill="#ffffff"/>
<text class="l" transform="translate(1027.9 256.2) scale(0.78 1)" font-size="9.5" fill="#ffffff" text-anchor="middle" stroke="#ffffff" stroke-width="0.3">100</text>
<path class="c" d="M893 264.5H960" stroke="#00ffff" stroke-width="1"/>
<path class="c" d="M893 346.5H960" stroke="#00ffff" stroke-width="1"/>
<path class="c" d="M893.5 264V347" stroke="#00ffff" stroke-width="1"/>
<path class="c" d="M959.5 264V347" stroke="#00ffff" stroke-width="1"/>
<path class="c" d="M898.5 264V347" stroke="#00ffff" stroke-width="1"/>
<path class="c" d="M954.5 264V347" stroke="#00ffff" stroke-width="1"/>
<path class="c" d="M893.5 346V364" stroke="#ffffff" stroke-width="1"/>
<path class="c" d="M959.5 346V364" stroke="#ffffff" stroke-width="1"/>
<path class="c" d="M893 363.5H960" stroke="#ffffff" stroke-width="1"/>
<rect x="895" y="364" width="3" height="1" fill="#ffffff"/>
<rect x="955" y="364" width="3" height="1" fill="#ffffff"/>
<text class="l" transform="translate(926.6 362.4) scale(0.78 1)" font-size="9.5" fill="#ffffff" text-anchor="middle" stroke="#ffffff" stroke-width="0.3">80</text>
<path d="M1423.5 102V225.5A10 10 0 0 0 1433.5 235.5H1477.5A10 10 0 0 0 1487.5 225.5V102" stroke="#00ffff" stroke-width="1.2" fill="none"/>
<path d="M1427.5 102V226.0A6.5 6.5 0 0 0 1434.0 232.5H1477.0A6.5 6.5 0 0 0 1483.5 226.0V102" stroke="#00ffff" stroke-width="1.2" fill="none"/>
<path class="c" d="M1423 102.5H1428" stroke="#00ffff" stroke-width="1"/>
<path class="c" d="M1483 102.5H1488" stroke="#00ffff" stroke-width="1"/>
<path d="M1425.5 102V225A8 8 0 0 0 1433.5 233.5H1477A8 8 0 0 0 1485.5 225V102" stroke="#00ffff" stroke-width="1" fill="none"/>
<path class="c" d="M1423.5 92V103" stroke="#ffffff" stroke-width="1"/>
<path class="c" d="M1487.5 92V103" stroke="#ffffff" stroke-width="1"/>
<path class="c" d="M1423 92.5H1488" stroke="#ffffff" stroke-width="1"/>
<rect x="1425" y="93" width="3" height="1" fill="#ffffff"/>
<rect x="1483" y="93" width="3" height="1" fill="#ffffff"/>
<text class="l" transform="translate(1455.25 91.6) scale(0.78 1)" font-size="9.5" fill="#ffffff" text-anchor="middle" stroke="#ffffff" stroke-width="0.3">80</text>
<path class="c" d="M1410.5 102V223" stroke="#ffffff" stroke-width="1"/>
<path class="c" d="M1410 102.5H1424" stroke="#ffffff" stroke-width="1"/>
<path class="c" d="M1410 222.5H1424" stroke="#ffffff" stroke-width="1"/>
<text class="l" transform="translate(1408.7 162.7) rotate(-90) scale(0.78 1)" font-size="9.5" fill="#ffffff" text-anchor="middle" stroke="#ffffff" stroke-width="0.3">147</text>
<rect x="1412" y="105" width="1" height="3" fill="#ffffff"/>
<rect x="1412" y="218" width="1" height="3" fill="#ffffff"/>
<path d="M1427 225.4L1450.4 215" stroke="#ffffff" stroke-width="1.1"/>
<path d="M1427 225.4L1430.58 222.38L1431.64 224.76Z" fill="#ffffff" stroke="#ffffff" stroke-width="0.5"/>
<text class="l" transform="translate(1443 217.3) rotate(-24) scale(0.78 1)" font-size="9.5" fill="#ffffff" text-anchor="middle" stroke="#ffffff" stroke-width="0.3">R12</text>
<path class="c" d="M1435.5 232V244" stroke="#ffffff" stroke-width="1"/>
<path class="c" d="M1474.5 232V244" stroke="#ffffff" stroke-width="1"/>
<path class="c" d="M1435 243.5H1475" stroke="#ffffff" stroke-width="1"/>
<rect x="1437" y="244" width="3" height="1" fill="#ffffff"/>
<rect x="1470" y="244" width="3" height="1" fill="#ffffff"/>
<text class="l" transform="translate(1454.9 242.6) scale(0.78 1)" font-size="9.5" fill="#ffffff" text-anchor="middle" stroke="#ffffff" stroke-width="0.3">46</text>
<path d="M1647.5 79.5H1696.7Q1699.1 79.5 1700.7 74.2A49 49 0 0 1 1789.9 74.2Q1791.5 79.5 1793.9 79.5H1844.5" stroke="#00ffff" stroke-width="1.2" fill="none"/>
<path d="M1647.5 110.5H1696.7Q1699.1 110.5 1700.7 114.8A49 49 0 0 0 1789.9 114.8Q1791.5 110.5 1793.9 110.5H1844.5" stroke="#00ffff" stroke-width="1.2" fill="none"/>
<path d="M1647.5 84.5H1694.47Q1697.97 84.5 1700.97 81.5" stroke="#00ffff" stroke-width="1.2" fill="none"/>
<path d="M1844.5 84.5H1796.13Q1792.63 84.5 1789.63 81.5" stroke="#00ffff" stroke-width="1.2" fill="none"/>
<path d="M1647.5 105.5H1694.77Q1698.27 105.5 1701.27 108.5" stroke="#00ffff" stroke-width="1.2" fill="none"/>
<path d="M1844.5 105.5H1795.83Q1792.33 105.5 1789.33 108.5" stroke="#00ffff" stroke-width="1.2" fill="none"/>
<path class="c" d="M1647.5 79V85" stroke="#00ffff" stroke-width="1"/>
<path class="c" d="M1844.5 79V85" stroke="#00ffff" stroke-width="1"/>
<path class="c" d="M1647.5 105V111" stroke="#00ffff" stroke-width="1"/>
<path class="c" d="M1844.5 105V111" stroke="#00ffff" stroke-width="1"/>
<path class="c" d="M1647 108.5H1700" stroke="#00ffff" stroke-width="1"/>
<path class="c" d="M1792 108.5H1845" stroke="#00ffff" stroke-width="1"/>
<circle cx="1745.3" cy="94.5" r="46.2" stroke="#ff00ff" stroke-width="1.2" fill="none" stroke-dasharray="9 3"/>
<circle cx="1745.3" cy="94.5" r="43.2" stroke="#ff00ff" stroke-width="1.2" fill="none" stroke-dasharray="9 3"/>
<circle cx="1745.3" cy="94.5" r="40.3" stroke="#ff00ff" stroke-width="1.2" fill="none" stroke-dasharray="9 3"/>
<path class="c" d="M1637 94.5H1652" stroke="#ff0000" stroke-width="1"/>
<path class="c" d="M1661 94.5H1663" stroke="#ff0000" stroke-width="1"/>
<path class="c" d="M1670 94.5H1688" stroke="#ff0000" stroke-width="1"/>
<path class="c" d="M1713 94.5H1736" stroke="#ff0000" stroke-width="1"/>
<path class="c" d="M1755 94.5H1777" stroke="#ff0000" stroke-width="1"/>
<path class="c" d="M1796 94.5H1818" stroke="#ff0000" stroke-width="1"/>
<path class="c" d="M1828 94.5H1830" stroke="#ff0000" stroke-width="1"/>
<path class="c" d="M1838 94.5H1852" stroke="#ff0000" stroke-width="1"/>
<path class="c" d="M1671.5 65V86" stroke="#ff0000" stroke-width="1"/>
<path class="c" d="M1671.5 105V126" stroke="#ff0000" stroke-width="1"/>
<path d="M1667.2 70.0L1675.8 78.4M1675.8 70.0L1667.2 78.4" stroke="#ff0000" stroke-width="1" fill="none"/>
<path d="M1667.2 112.8L1675.8 121.2M1675.8 112.8L1667.2 121.2" stroke="#ff0000" stroke-width="1" fill="none"/>
<path class="c" d="M1819.5 65V86" stroke="#ff0000" stroke-width="1"/>
<path class="c" d="M1819.5 105V126" stroke="#ff0000" stroke-width="1"/>
<path d="M1815.2 70.0L1823.8 78.4M1823.8 70.0L1815.2 78.4" stroke="#ff0000" stroke-width="1" fill="none"/>
<path d="M1815.2 112.8L1823.8 121.2M1823.8 112.8L1815.2 121.2" stroke="#ff0000" stroke-width="1" fill="none"/>
<path class="c" d="M1664.5 79V85" stroke="#ff00ff" stroke-width="1"/>
<path class="c" d="M1664.5 105V111" stroke="#ff00ff" stroke-width="1"/>
<path class="c" d="M1679.5 79V85" stroke="#ff00ff" stroke-width="1"/>
<path class="c" d="M1679.5 105V111" stroke="#ff00ff" stroke-width="1"/>
<path class="c" d="M1811.5 79V85" stroke="#ff00ff" stroke-width="1"/>
<path class="c" d="M1811.5 105V111" stroke="#ff00ff" stroke-width="1"/>
<path class="c" d="M1826.5 79V85" stroke="#ff00ff" stroke-width="1"/>
<path class="c" d="M1826.5 105V111" stroke="#ff00ff" stroke-width="1"/>
<path class="c" d="M1631.5 84V106" stroke="#ffffff" stroke-width="1"/>
<path class="c" d="M1631 84.5H1648" stroke="#ffffff" stroke-width="1"/>
<path class="c" d="M1631 105.5H1648" stroke="#ffffff" stroke-width="1"/>
<text class="l" transform="translate(1629.8 95) rotate(-90) scale(0.78 1)" font-size="9.5" fill="#ffffff" text-anchor="middle" stroke="#ffffff" stroke-width="0.3">25</text>
<path class="c" d="M1647.5 110V136" stroke="#ffffff" stroke-width="1"/>
<path class="c" d="M1695.5 93V136" stroke="#ffffff" stroke-width="1"/>
<path class="c" d="M1647 135.5H1696" stroke="#ffffff" stroke-width="1"/>
<rect x="1649" y="136" width="3" height="1" fill="#ffffff"/>
<rect x="1691" y="136" width="3" height="1" fill="#ffffff"/>
<text class="l" transform="translate(1671.5 133.8) scale(0.78 1)" font-size="9.5" fill="#ffffff" text-anchor="middle" stroke="#ffffff" stroke-width="0.3">59</text>
<path class="c" d="M1687 93.5H1704" stroke="#ffffff" stroke-width="1"/>
<path d="M1745.3 94.5L1678.7 121.7" stroke="#ffffff" stroke-width="1.1"/>
<path d="M1745.3 94.5L1812 121.7" stroke="#ffffff" stroke-width="1.1"/>
<path d="M1678.7 121.7A71.8 71.8 0 0 0 1812 121.7" stroke="#ffffff" stroke-width="1.2" fill="none"/>
<path d="M1678.7 121.7L1678.14 126.35L1675.75 125.33Z" fill="#ffffff" stroke="#ffffff" stroke-width="0.5"/>
<path d="M1812 121.7L1814.95 125.33L1812.56 126.35Z" fill="#ffffff" stroke="#ffffff" stroke-width="0.5"/>
<text class="l" transform="translate(1745.8 165.3) scale(0.78 1)" font-size="9.5" fill="#ffffff" text-anchor="middle" stroke="#ffffff" stroke-width="0.3">136°</text>
<path d="M1723.3 136.3L1736.3 111.3" stroke="#ffffff" stroke-width="1.1"/>
<text class="l" transform="translate(1731.2 118) rotate(-62.5) scale(0.78 1)" font-size="9.5" fill="#ffffff" text-anchor="middle" stroke="#ffffff" stroke-width="0.3">R57</text>
<path d="M1709.2 97.5A37 37 0 0 0 1717.5 114.2" stroke="#ffffff" stroke-width="1.2" fill="none"/>
<text class="l" transform="translate(1710.5 96.5) scale(0.78 1)" font-size="9.5" fill="#ffffff" text-anchor="middle" stroke="#ffffff" stroke-width="0.3">68°</text>
<text class="l" transform="translate(1688.5 119) rotate(-22) scale(0.78 1)" font-size="9.5" fill="#ffffff" text-anchor="middle" stroke="#ffffff" stroke-width="0.3">39</text>
<path class="c" d="M1811.5 110V141" stroke="#ffffff" stroke-width="1"/>
<path class="c" d="M1826.5 110V141" stroke="#ffffff" stroke-width="1"/>
<path class="c" d="M1811 140.5H1846" stroke="#ffffff" stroke-width="1"/>
<text class="l" transform="translate(1838.8 139.6) scale(0.78 1)" font-size="9.5" fill="#ffffff" text-anchor="middle" stroke="#ffffff" stroke-width="0.3">ø18</text>
<text class="l" transform="translate(1899 87) scale(0.8 1)" font-size="17" fill="#ffff00" text-anchor="middle" font-weight="700">A</text>
<path class="c" d="M1898.5 98V122" stroke="#ffff00" stroke-width="1"/>
<path class="c" d="M1874 121.5H1899" stroke="#ffff00" stroke-width="1"/>
<path d="M1898.9 92.3L1900.4 100.5H1897.4Z" stroke="#ffff00" stroke-width="1" fill="#ffff00"/>
<path class="c" d="M620 386.5H1099" stroke="#ffffff" stroke-width="1"/>
<path class="c" d="M620 407.5H1099" stroke="#ffffff" stroke-width="1"/>
<path class="c" d="M620 428.5H1099" stroke="#ffffff" stroke-width="1"/>
<path class="c" d="M620 449.5H1099" stroke="#ffffff" stroke-width="1"/>
<path class="c" d="M620 471.5H1099" stroke="#ffffff" stroke-width="1"/>
<path class="c" d="M620 492.5H1099" stroke="#ffffff" stroke-width="1"/>
<path class="c" d="M620 513.5H1099" stroke="#ffffff" stroke-width="1"/>
<path class="c" d="M620 534.5H1099" stroke="#ffffff" stroke-width="1"/>
<path class="c" d="M620 556.5H1099" stroke="#ffffff" stroke-width="1"/>
<path class="c" d="M620 577.5H1099" stroke="#ffffff" stroke-width="1"/>
<path class="c" d="M620 598.5H1099" stroke="#ffffff" stroke-width="1"/>
<path class="c" d="M620 619.5H1099" stroke="#00ffff" stroke-width="1"/>
<path class="c" d="M620 651.5H1099" stroke="#00ffff" stroke-width="1"/>
<path class="c" d="M620.5 386V780" stroke="#00ffff" stroke-width="1"/>
<path class="c" d="M673.5 386V652" stroke="#00ffff" stroke-width="1"/>
<path class="c" d="M753.5 386V652" stroke="#00ffff" stroke-width="1"/>
<path class="c" d="M873.5 386V652" stroke="#00ffff" stroke-width="1"/>
<path class="c" d="M899.5 386V652" stroke="#00ffff" stroke-width="1"/>
<path class="c" d="M979.5 386V652" stroke="#00ffff" stroke-width="1"/>
<path class="c" d="M1005.5 386V636" stroke="#00ffff" stroke-width="1"/>
<path class="c" d="M1032.5 386V652" stroke="#00ffff" stroke-width="1"/>
<path class="c" d="M979 635.5H1033" stroke="#ffffff" stroke-width="1"/>
<text class="l" transform="translate(650.2 404) scale(0.74 1)" font-size="13" fill="#ffffff" text-anchor="middle">11</text>
<text class="k" x="758.2" y="404.0" font-size="10.5" fill="#fff" font-weight="500" textLength="12.8" lengthAdjust="spacingAndGlyphs">槽钢</text>
<text class="l" x="771.3" y="404.0" font-size="13" fill="#fff" textLength="14.5" lengthAdjust="spacingAndGlyphs" xml:space="preserve">12#</text>
<text class="l" transform="translate(888 404) scale(0.74 1)" font-size="13" fill="#ffffff" text-anchor="middle">1</text>
<text class="l" transform="translate(941.4 403.2) scale(0.76 1)" font-size="13" fill="#ffffff" text-anchor="middle">Q235-B</text>
<text class="l" transform="translate(1059 404) scale(0.76 1)" font-size="13" fill="#ffffff" text-anchor="middle">L=600</text>
<text class="l" transform="translate(650.2 425.1) scale(0.74 1)" font-size="13" fill="#ffffff" text-anchor="middle">10</text>
<text class="k" x="758.2" y="425.1" font-size="10.5" fill="#fff" font-weight="500" textLength="12.8" lengthAdjust="spacingAndGlyphs">筋板</text>
<text class="l" x="771.3" y="425.1" font-size="13" fill="#fff" textLength="49.7" lengthAdjust="spacingAndGlyphs" xml:space="preserve">-30X100X8</text>
<text class="l" transform="translate(888 425.1) scale(0.74 1)" font-size="13" fill="#ffffff" text-anchor="middle">2</text>
<text class="l" transform="translate(941.4 424.3) scale(0.76 1)" font-size="13" fill="#ffffff" text-anchor="middle">Q235-B</text>
<text class="l" transform="translate(992.4 425.1) scale(0.74 1)" font-size="13" fill="#ffffff" text-anchor="middle">0.19</text>
<text class="l" transform="translate(1018.7 425.1) scale(0.74 1)" font-size="13" fill="#ffffff" text-anchor="middle">0.38</text>
<text class="l" transform="translate(650.2 446.3) scale(0.74 1)" font-size="13" fill="#ffffff" text-anchor="middle">9</text>
<text class="k" x="758.2" y="446.3" font-size="10.5" fill="#fff" font-weight="500" textLength="12.8" lengthAdjust="spacingAndGlyphs">垫板</text>
<text class="l" x="771.3" y="446.3" font-size="13" fill="#fff" textLength="48.7" lengthAdjust="spacingAndGlyphs" xml:space="preserve">-50X100X3</text>
<text class="l" transform="translate(888 446.3) scale(0.74 1)" font-size="13" fill="#ffffff" text-anchor="middle">1</text>
<text class="l" transform="translate(941.4 445.5) scale(0.76 1)" font-size="13" fill="#ffffff" text-anchor="middle">304</text>
<text class="l" transform="translate(1018.7 446.3) scale(0.74 1)" font-size="13" fill="#ffffff" text-anchor="middle">0.12</text>
<text class="l" transform="translate(650.2 468.2) scale(0.74 1)" font-size="13" fill="#ffffff" text-anchor="middle">8</text>
<text class="k" x="758.2" y="468.2" font-size="10.5" fill="#fff" font-weight="500" textLength="12.8" lengthAdjust="spacingAndGlyphs">筋板</text>
<text class="l" x="771.3" y="468.2" font-size="13" fill="#fff" textLength="49.7" lengthAdjust="spacingAndGlyphs" xml:space="preserve">-152X66X6</text>
<text class="l" transform="translate(888 468.2) scale(0.74 1)" font-size="13" fill="#ffffff" text-anchor="middle">1</text>
<text class="l" transform="translate(941.4 467.4) scale(0.76 1)" font-size="13" fill="#ffffff" text-anchor="middle">Q235-B</text>
<text class="l" transform="translate(1018.7 468.2) scale(0.74 1)" font-size="13" fill="#ffffff" text-anchor="middle">0.49</text>
<text class="l" transform="translate(650.2 489) scale(0.74 1)" font-size="13" fill="#ffffff" text-anchor="middle">7</text>
<text class="l" x="674.8" y="489.0" font-size="13" fill="#fff" textLength="64.6" lengthAdjust="spacingAndGlyphs">GB/T6163-1999</text>
<text class="k" x="758.2" y="489.0" font-size="10.5" fill="#fff" font-weight="500" textLength="12.8" lengthAdjust="spacingAndGlyphs">螺母</text>
<text class="l" x="771.3" y="489.0" font-size="13" fill="#fff" textLength="17.2" lengthAdjust="spacingAndGlyphs" xml:space="preserve">M16</text>
<text class="l" transform="translate(888 489) scale(0.74 1)" font-size="13" fill="#ffffff" text-anchor="middle">2</text>
<text class="l" transform="translate(941.4 488.2) scale(0.76 1)" font-size="13" fill="#ffffff" text-anchor="middle">8</text>
<text class="l" transform="translate(992.4 489) scale(0.74 1)" font-size="13" fill="#ffffff" text-anchor="middle">0.3</text>
<text class="l" transform="translate(1018.7 489) scale(0.74 1)" font-size="13" fill="#ffffff" text-anchor="middle">0.6</text>
<text class="l" transform="translate(650.2 510.3) scale(0.74 1)" font-size="13" fill="#ffffff" text-anchor="middle">6</text>
<text class="k" x="758.2" y="510.3" font-size="10.5" fill="#fff" font-weight="500" textLength="12.8" lengthAdjust="spacingAndGlyphs">螺栓</text>
<text class="l" x="771.3" y="510.3" font-size="13" fill="#fff" textLength="19.9" lengthAdjust="spacingAndGlyphs" xml:space="preserve">M16X65</text>
<text class="l" transform="translate(888 510.3) scale(0.74 1)" font-size="13" fill="#ffffff" text-anchor="middle">2</text>
<text class="l" transform="translate(941.4 509.5) scale(0.76 1)" font-size="13" fill="#ffffff" text-anchor="middle">8.8</text>
<text class="l" transform="translate(992.4 510.3) scale(0.74 1)" font-size="13" fill="#ffffff" text-anchor="middle">0.3</text>
<text class="l" transform="translate(1018.7 510.3) scale(0.74 1)" font-size="13" fill="#ffffff" text-anchor="middle">0.6</text>
<text class="l" transform="translate(1059 510.3) scale(0.76 1)" font-size="13" fill="#ffffff" text-anchor="middle">L=65</text>
<text class="l" transform="translate(650.2 531.4) scale(0.74 1)" font-size="13" fill="#ffffff" text-anchor="middle">5</text>
<text class="l" x="674.8" y="531.4" font-size="13" fill="#fff" textLength="64.6" lengthAdjust="spacingAndGlyphs">HG/T21629-1999</text>
<text class="k" x="758.2" y="531.4" font-size="10.5" fill="#fff" font-weight="500" textLength="12.8" lengthAdjust="spacingAndGlyphs">管夹</text>
<text class="l" x="771.3" y="531.4" font-size="13" fill="#fff" textLength="65.9" lengthAdjust="spacingAndGlyphs" xml:space="preserve"> A5-1   -40X6</text>
<text class="l" transform="translate(888 531.4) scale(0.74 1)" font-size="13" fill="#ffffff" text-anchor="middle">2</text>
<text class="l" transform="translate(941.4 530.6) scale(0.76 1)" font-size="13" fill="#ffffff" text-anchor="middle">Q235-B</text>
<text class="l" transform="translate(992.4 531.4) scale(0.74 1)" font-size="13" fill="#ffffff" text-anchor="middle">0.56</text>
<text class="l" transform="translate(1018.7 531.4) scale(0.74 1)" font-size="13" fill="#ffffff" text-anchor="middle">1.12</text>
<text class="l" transform="translate(1059 531.4) scale(0.76 1)" font-size="13" fill="#ffffff" text-anchor="middle">L=296</text>
<text class="l" transform="translate(650.2 553.1) scale(0.74 1)" font-size="13" fill="#ffffff" text-anchor="middle">4</text>
<text class="k" x="758.2" y="553.0999999999999" font-size="10.5" fill="#fff" font-weight="500" textLength="28.7" lengthAdjust="spacingAndGlyphs">支架主板</text>
<text class="l" transform="translate(888 553.1) scale(0.74 1)" font-size="13" fill="#ffffff" text-anchor="middle">1</text>
<text class="l" transform="translate(941.4 552.3) scale(0.76 1)" font-size="13" fill="#ffffff" text-anchor="middle">Q235-B</text>
<text class="l" transform="translate(1018.7 553.1) scale(0.74 1)" font-size="13" fill="#ffffff" text-anchor="middle">1.8</text>
<text class="l" transform="translate(650.2 574.5) scale(0.74 1)" font-size="13" fill="#ffffff" text-anchor="middle">3</text>
<text class="k" x="758.2" y="574.5" font-size="10.5" fill="#fff" font-weight="500" textLength="12.8" lengthAdjust="spacingAndGlyphs">垫板</text>
<text class="l" x="771.3" y="574.5" font-size="13" fill="#fff" textLength="51.2" lengthAdjust="spacingAndGlyphs" xml:space="preserve">-80X100X6</text>
<text class="l" transform="translate(888 574.5) scale(0.74 1)" font-size="13" fill="#ffffff" text-anchor="middle">1</text>
<text class="l" transform="translate(941.4 573.7) scale(0.76 1)" font-size="13" fill="#ffffff" text-anchor="middle">304</text>
<text class="l" transform="translate(1018.7 574.5) scale(0.74 1)" font-size="13" fill="#ffffff" text-anchor="middle">0.38</text>
<text class="l" transform="translate(650.2 595.2) scale(0.74 1)" font-size="13" fill="#ffffff" text-anchor="middle">2</text>
<text class="k" x="758.2" y="595.1999999999999" font-size="10.5" fill="#fff" font-weight="500" textLength="12.8" lengthAdjust="spacingAndGlyphs">底板</text>
<text class="l" x="771.3" y="595.1999999999999" font-size="13" fill="#fff" textLength="62.6" lengthAdjust="spacingAndGlyphs" xml:space="preserve">-110X100X14</text>
<text class="l" transform="translate(888 595.2) scale(0.74 1)" font-size="13" fill="#ffffff" text-anchor="middle">1</text>
<text class="l" transform="translate(941.4 594.4) scale(0.76 1)" font-size="13" fill="#ffffff" text-anchor="middle">Q235-B</text>
<text class="l" transform="translate(1018.7 595.2) scale(0.74 1)" font-size="13" fill="#ffffff" text-anchor="middle">1.21</text>
<text class="l" transform="translate(650.2 616) scale(0.74 1)" font-size="13" fill="#ffffff" text-anchor="middle">1</text>
<text class="k" x="758.2" y="616.0" font-size="10.5" fill="#fff" font-weight="500" textLength="37.6" lengthAdjust="spacingAndGlyphs">高度调整件</text>
<text class="l" transform="translate(888 616) scale(0.74 1)" font-size="13" fill="#ffffff" text-anchor="middle">1</text>
<text class="l" transform="translate(941.4 615.2) scale(0.76 1)" font-size="13" fill="#ffffff" text-anchor="middle">Q235-B</text>
<text class="k" x="1054.3" y="617.4" font-size="10.5" fill="#fff" font-weight="500" textLength="19.7" lengthAdjust="spacingAndGlyphs">现场定</text>
<text class="k" x="626.8" y="646.5" font-size="12" fill="#ffffff" font-weight="500" textLength="9.5" lengthAdjust="spacingAndGlyphs" xml:space="preserve">件</text>
<text class="k" x="641" y="646.5" font-size="12" fill="#ffffff" font-weight="500" textLength="9.5" lengthAdjust="spacingAndGlyphs" xml:space="preserve">号</text>
<text class="k" x="691.6" y="646.5" font-size="12" fill="#ffffff" font-weight="500" textLength="39.4" lengthAdjust="spacingAndGlyphs" xml:space="preserve">图号或标准号</text>
<text class="k" x="781" y="646.5" font-size="12" fill="#ffffff" font-weight="500" textLength="9.5" lengthAdjust="spacingAndGlyphs" xml:space="preserve">名</text>
<text class="k" x="808" y="646.5" font-size="12" fill="#ffffff" font-weight="500" textLength="9.5" lengthAdjust="spacingAndGlyphs" xml:space="preserve">称</text>
<text class="k" x="878.2" y="646.5" font-size="12" fill="#ffffff" font-weight="500" textLength="13" lengthAdjust="spacingAndGlyphs" xml:space="preserve">数量</text>
<text class="k" x="911" y="646.5" font-size="12" fill="#ffffff" font-weight="500" textLength="9.5" lengthAdjust="spacingAndGlyphs" xml:space="preserve">材</text>
<text class="k" x="934.5" y="646.5" font-size="12" fill="#ffffff" font-weight="500" textLength="9.5" lengthAdjust="spacingAndGlyphs" xml:space="preserve">料</text>
<text class="k" x="988" y="632" font-size="11" fill="#ffffff" font-weight="500" textLength="9.5" lengthAdjust="spacingAndGlyphs" xml:space="preserve">单</text>
<text class="k" x="1014.3" y="632" font-size="11" fill="#ffffff" font-weight="500" textLength="9.5" lengthAdjust="spacingAndGlyphs" xml:space="preserve">总</text>
<text class="k" x="984" y="649" font-size="10.5" fill="#ffffff" font-weight="500" textLength="43.6" lengthAdjust="spacingAndGlyphs" xml:space="preserve">质量(Kg)</text>
<text class="k" x="1051.3" y="647.5" font-size="13" fill="#ffffff" font-weight="500" textLength="18.6" lengthAdjust="spacingAndGlyphs" xml:space="preserve">备注</text>
<path class="c" d="M620 683.5H1099" stroke="#00ffff" stroke-width="1"/>
<path class="c" d="M620 699.5H754" stroke="#ffffff" stroke-width="1"/>
<path class="c" d="M620 715.5H754" stroke="#ffffff" stroke-width="1"/>
<path class="c" d="M620 731.5H754" stroke="#ffffff" stroke-width="1"/>
<path class="c" d="M620 747.5H754" stroke="#ffffff" stroke-width="1"/>
<path class="c" d="M620 763.5H754" stroke="#ffffff" stroke-width="1"/>
<path class="c" d="M660.5 683V780" stroke="#00ffff" stroke-width="1"/>
<path class="c" d="M713.5 683V780" stroke="#00ffff" stroke-width="1"/>
<path class="c" d="M753.5 683V780" stroke="#00ffff" stroke-width="1"/>
<path class="c" d="M912.5 651V780" stroke="#00ffff" stroke-width="1"/>
<path class="c" d="M753 763.5H1099" stroke="#00ffff" stroke-width="1"/>
<path class="c" d="M806.5 763V780" stroke="#00ffff" stroke-width="1"/>
<path class="c" d="M859.5 763V780" stroke="#00ffff" stroke-width="1"/>
<path class="c" d="M966.5 763V780" stroke="#00ffff" stroke-width="1"/>
<path class="c" d="M1019.5 763V780" stroke="#00ffff" stroke-width="1"/>
<path class="c" d="M1072.5 763V780" stroke="#00ffff" stroke-width="1"/>
<path class="c" d="M966.5 683V716" stroke="#00ffff" stroke-width="1"/>
<path class="c" d="M912 699.5H1099" stroke="#ffffff" stroke-width="1"/>
<path class="c" d="M912 715.5H1099" stroke="#00ffff" stroke-width="1"/>
<text class="k" x="628.8" y="696.2" font-size="10.5" fill="#ffffff" font-weight="500" textLength="19.7" lengthAdjust="spacingAndGlyphs" xml:space="preserve">设 计</text>
<text class="k" x="628.8" y="712.4000000000001" font-size="10.5" fill="#ffffff" font-weight="500" textLength="19.7" lengthAdjust="spacingAndGlyphs" xml:space="preserve">校 核</text>
<text class="k" x="628.8" y="728.6" font-size="10.5" fill="#ffffff" font-weight="500" textLength="19.7" lengthAdjust="spacingAndGlyphs" xml:space="preserve">审 核</text>
<text class="k" x="628.8" y="744.8000000000001" font-size="10.5" fill="#ffffff" font-weight="500" textLength="25.1" lengthAdjust="spacingAndGlyphs" xml:space="preserve">标准化</text>
<text class="k" x="628.8" y="761.0" font-size="10.5" fill="#ffffff" font-weight="500" textLength="19.7" lengthAdjust="spacingAndGlyphs" xml:space="preserve">审 定</text>
<text class="k" x="628.8" y="777.2" font-size="10.5" fill="#ffffff" font-weight="500" textLength="19.7" lengthAdjust="spacingAndGlyphs" xml:space="preserve">批 准</text>
<text class="k" x="917.9" y="696.4" font-size="10.5" fill="#ffffff" font-weight="500" textLength="36" lengthAdjust="spacingAndGlyphs" xml:space="preserve">设计项目</text>
<text class="k" x="917.9" y="712.6" font-size="10.5" fill="#ffffff" font-weight="500" textLength="36" lengthAdjust="spacingAndGlyphs" xml:space="preserve">设计阶段</text>
<text class="k" x="754.9" y="776" font-size="10.5" fill="#ffffff" font-weight="500" textLength="13.1" lengthAdjust="spacingAndGlyphs" xml:space="preserve">比例</text>
<text class="k" x="808.2" y="776" font-size="10.5" fill="#ffffff" font-weight="500" textLength="12.8" lengthAdjust="spacingAndGlyphs" xml:space="preserve">区域</text>
<text class="k" x="861" y="776" font-size="10.5" fill="#ffffff" font-weight="500" textLength="13" lengthAdjust="spacingAndGlyphs" xml:space="preserve">专业</text>
<text class="k" x="915" y="776" font-size="10.5" fill="#ffffff" font-weight="500" textLength="6.5" lengthAdjust="spacingAndGlyphs" xml:space="preserve">第</text>
<text class="k" x="956.8" y="776" font-size="10.5" fill="#ffffff" font-weight="500" textLength="6.5" lengthAdjust="spacingAndGlyphs" xml:space="preserve">张</text>
<text class="k" x="969.7" y="776" font-size="10.5" fill="#ffffff" font-weight="500" textLength="6.5" lengthAdjust="spacingAndGlyphs" xml:space="preserve">共</text>
<text class="k" x="1009.6" y="776" font-size="10.5" fill="#ffffff" font-weight="500" textLength="6.5" lengthAdjust="spacingAndGlyphs" xml:space="preserve">张</text>
<text class="k" x="1064.5" y="776" font-size="10.5" fill="#ffffff" font-weight="500" textLength="6.5" lengthAdjust="spacingAndGlyphs" xml:space="preserve">年</text>
<text class="k" x="1092.2" y="776" font-size="10.5" fill="#ffffff" font-weight="500" textLength="6" lengthAdjust="spacingAndGlyphs" xml:space="preserve">版</text>
<text class="s" x="767" y="729.5" font-size="21" fill="#ffff00" font-weight="300" textLength="130.5" lengthAdjust="spacingAndGlyphs">导向支架安装示意图</text>
</svg></body></html>
